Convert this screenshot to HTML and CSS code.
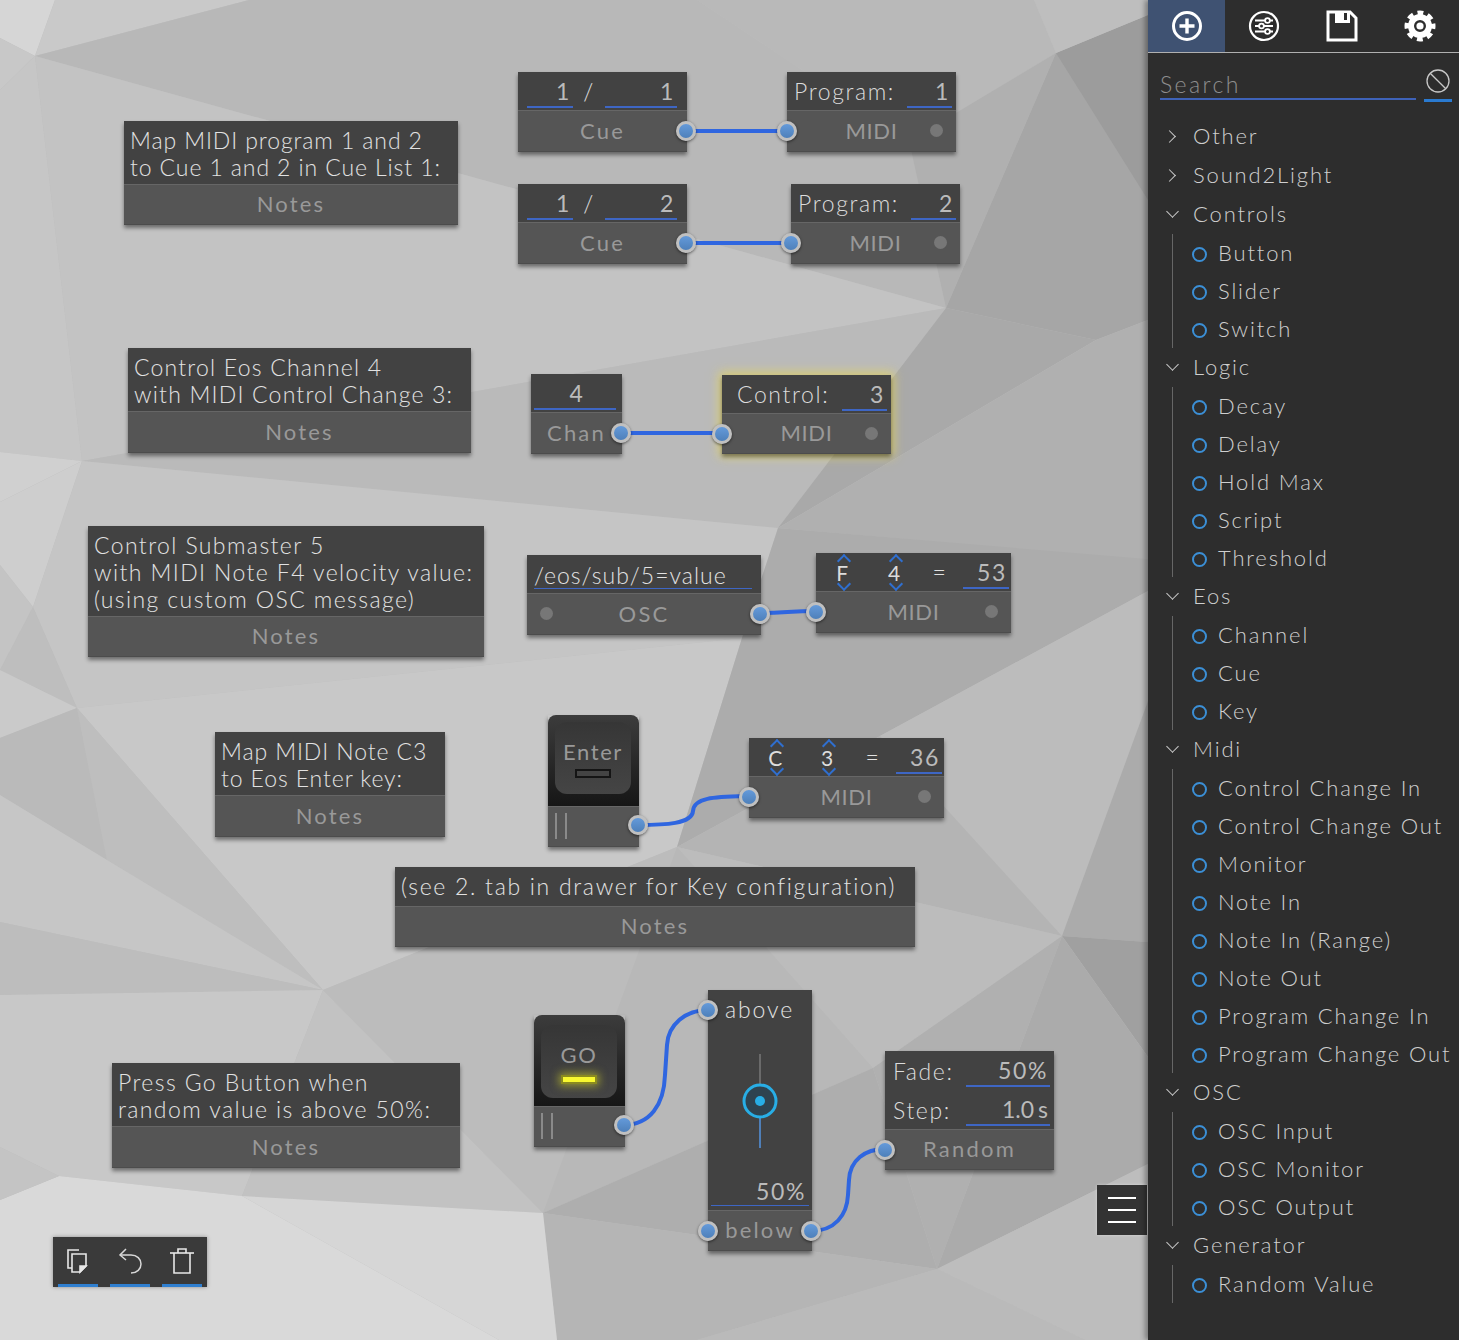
FILE: index.html
```html
<!DOCTYPE html>
<html lang="en">
<head>
<meta charset="UTF-8">
<title>Patch editor</title>
<link rel="stylesheet" href="styles.css">
</head>
<body>
<div class="app">
  <main class="canvas">
    <svg class="backdrop" width="1148" height="1340" viewBox="0 0 1148 1340">
      <rect width="1148" height="1340" fill="#bdbdbd"/>
      <polygon fill="#d6d6d6" points="0,0 55,0 35,56 0,38"/>
      <polygon fill="#c8c8c8" points="0,38 35,56 0,90"/>
      <polygon fill="#c9c9c9" points="55,0 249,0 35,56"/>
      <polygon fill="#b8b8b8" points="35,56 946,308 909,141 697,0 249,0"/>
      <polygon fill="#c6c6c6" points="0,90 35,56 82,461 0,452"/>
      <polygon fill="#c3c3c3" points="35,56 946,308 82,461"/>
      <polygon fill="#bababa" points="946,308 82,461 778,528"/>
      <polygon fill="#a9a9a9" points="946,308 778,528 1096,340"/>
      <polygon fill="#b9b9b9" points="697,0 1034,0 1056,53 909,141"/>
      <polygon fill="#b0b0b0" points="909,141 1056,53 946,308"/>
      <polygon fill="#a6a6a6" points="1056,53 1148,100 1148,320 1096,340 946,308"/>
      <polygon fill="#9c9c9c" points="1056,53 1148,15 1148,200"/>
      <polygon fill="#bebebe" points="1034,0 1148,0 1148,15 1056,53"/>
      <polygon fill="#b0b0b0" points="1096,340 1148,320 1148,560 778,528"/>
      <polygon fill="#d0d0d0" points="0,452 82,461 0,502"/>
      <polygon fill="#cecece" points="0,502 82,461 33,607 0,565"/>
      <polygon fill="#c5c5c5" points="82,461 778,528 742,638 77,708 33,607"/>
      <polygon fill="#c4c4c4" points="0,565 33,607 0,670"/>
      <polygon fill="#bebebe" points="33,607 77,708 0,670"/>
      <polygon fill="#cacaca" points="0,670 77,708 0,738"/>
      <polygon fill="#bababa" points="0,738 77,708 107,860 0,795"/>
      <polygon fill="#c8c8c8" points="77,708 742,638 677,847 323,990"/>
      <polygon fill="#bebebe" points="77,708 323,990 107,860"/>
      <polygon fill="#c6c6c6" points="0,795 107,860 323,990 0,922"/>
      <polygon fill="#bdbdbd" points="0,922 323,990 0,995"/>
      <polygon fill="#c8c8c8" points="0,995 323,990 242,1196 59,1176 0,1147"/>
      <polygon fill="#c2c2c2" points="323,990 543,1213 242,1196"/>
      <polygon fill="#bcbcbc" points="323,990 677,847 543,1213"/>
      <polygon fill="#acacac" points="778,528 1148,559 1148,591 880,736 677,847 742,638"/>
      <polygon fill="#bcbcbc" points="880,736 1148,591 1148,701 1062,936"/>
      <polygon fill="#b4b4b4" points="677,847 880,736 1062,936"/>
      <polygon fill="#ababab" points="1148,701 1062,936 1148,942"/>
      <polygon fill="#a0a0a0" points="1062,936 1148,942 1148,1057"/>
      <polygon fill="#bcbcbc" points="677,847 1062,936 873,1068"/>
      <polygon fill="#b8b8b8" points="677,847 873,1068 543,1213"/>
      <polygon fill="#b0b0b0" points="873,1068 1062,936 937,1269"/>
      <polygon fill="#aeaeae" points="873,1068 937,1269 543,1213"/>
      <polygon fill="#ababab" points="1062,936 1148,1057 1148,1164 937,1269"/>
      <polygon fill="#bdbdbd" points="937,1269 1148,1164 1148,1340 1085,1340"/>
      <polygon fill="#b5b5b5" points="543,1213 937,1269 697,1340 557,1340"/>
      <polygon fill="#bababa" points="937,1269 1085,1340 697,1340"/>
      <polygon fill="#d6d6d6" points="242,1196 543,1213 557,1340 499,1340"/>
      <polygon fill="#d9d9d9" points="59,1176 242,1196 499,1340 0,1340 0,1200"/>
      <polygon fill="#c4c4c4" points="0,1147 59,1176 0,1200"/>
    </svg>

    <svg class="wires" width="1148" height="1340" viewBox="0 0 1148 1340" fill="none">
      <path d="M686 131H787"/>
      <path d="M686 243H791"/>
      <path d="M621 433H722"/>
      <path d="M760 613C785 613 790 611 816 611"/>
      <path d="M638 825C665 825 692 824 693 811C694 797 715 797 749 796"/>
      <path d="M623 1125C650 1125 664 1105 665 1075L667 1045C668 1025 685 1010 708 1010"/>
      <path d="M811 1231C835 1231 847 1215 848 1195L849 1180C850 1160 865 1149 885 1149"/>
    </svg>

    <section class="node note note-a">
      <div class="head text">Map MIDI program 1 and 2<br>to Cue 1 and 2 in Cue List 1:</div>
      <div class="foot">Notes</div>
    </section>

    <section class="node cue cue-a">
      <div class="head">
        <span class="field cue-list">1</span><span class="slash">/</span><span class="field cue-num">1</span>
      </div>
      <div class="foot">Cue<i class="port port-r"></i></div>
    </section>

    <section class="node midi midi-a">
      <div class="head">
        <span class="label">Program:</span><span class="field midi-val">1</span>
      </div>
      <div class="foot">MIDI<i class="port port-l"></i><i class="dot dot-r"></i></div>
    </section>

    <section class="node cue cue-b">
      <div class="head">
        <span class="field cue-list">1</span><span class="slash">/</span><span class="field cue-num">2</span>
      </div>
      <div class="foot">Cue<i class="port port-r"></i></div>
    </section>

    <section class="node midi midi-b">
      <div class="head">
        <span class="label">Program:</span><span class="field midi-val">2</span>
      </div>
      <div class="foot">MIDI<i class="port port-l"></i><i class="dot dot-r"></i></div>
    </section>

    <section class="node note note-b">
      <div class="head text">Control Eos Channel 4<br>with MIDI Control Change 3:</div>
      <div class="foot">Notes</div>
    </section>

    <section class="node chan">
      <div class="head"><span class="field chan-val">4</span></div>
      <div class="foot chan-foot">Chan<i class="port port-r"></i></div>
    </section>

    <section class="node midi midi-c">
      <div class="head">
        <span class="label">Control:</span><span class="field midi-val">3</span>
      </div>
      <div class="foot">MIDI<i class="port port-l"></i><i class="dot dot-r"></i></div>
    </section>

    <section class="node note note-c">
      <div class="head text">Control Submaster 5<br>with MIDI Note F4 velocity value:<br>(using custom OSC message)</div>
      <div class="foot">Notes</div>
    </section>

    <section class="node osc">
      <div class="head"><span class="field osc-path">/eos/sub/5=value</span></div>
      <div class="foot">OSC<i class="dot dot-l"></i><i class="port port-r"></i></div>
    </section>

    <section class="node midi-note midi-d">
      <div class="head">
        <span class="spin spin-a">F</span><span class="spin spin-b">4</span><span class="equals">=</span><span class="field note-val">53</span>
      </div>
      <div class="foot">MIDI<i class="port port-l"></i><i class="dot dot-r"></i></div>
    </section>

    <section class="node note note-d">
      <div class="head text">Map MIDI Note C3<br>to Eos Enter key:</div>
      <div class="foot">Notes</div>
    </section>

    <section class="node key key-enter">
      <div class="key-well">
        <div class="key-cap">
          <span class="key-name">Enter</span>
          <span class="led"></span>
        </div>
      </div>
      <div class="foot key-foot"><i class="grip"></i><i class="port port-r"></i></div>
    </section>

    <section class="node midi-note midi-e">
      <div class="head">
        <span class="spin spin-a">C</span><span class="spin spin-b">3</span><span class="equals">=</span><span class="field note-val">36</span>
      </div>
      <div class="foot">MIDI<i class="port port-l"></i><i class="dot dot-r"></i></div>
    </section>

    <section class="node note note-e">
      <div class="head text">(see 2. tab in drawer for Key configuration)</div>
      <div class="foot">Notes</div>
    </section>

    <section class="node note note-f">
      <div class="head text">Press Go Button when<br>random value is above 50%:</div>
      <div class="foot">Notes</div>
    </section>

    <section class="node key key-go">
      <div class="key-well">
        <div class="key-cap">
          <span class="key-name">GO</span>
          <span class="led led-on"></span>
        </div>
      </div>
      <div class="foot key-foot"><i class="grip"></i><i class="port port-r"></i></div>
    </section>

    <section class="node fader">
      <div class="fader-body">
        <span class="fader-top">above<i class="port port-l"></i></span>
        <div class="fader-track">
          <svg width="40" height="96" viewBox="0 0 40 96">
            <line x1="20" y1="0" x2="20" y2="32" stroke="#6a6a6a" stroke-width="2"/>
            <line x1="20" y1="62" x2="20" y2="94" stroke="#4f7fb8" stroke-width="2"/>
            <circle cx="20" cy="47" r="16" fill="#2e4350" stroke="#28aee6" stroke-width="3"/>
            <circle cx="20" cy="47" r="5" fill="#28aee6"/>
          </svg>
        </div>
        <span class="field fader-val">50%</span>
      </div>
      <div class="foot">below<i class="port port-l"></i><i class="port port-r"></i></div>
    </section>

    <section class="node random">
      <div class="random-body">
        <div class="random-row"><span class="label">Fade:</span><span class="field random-val">50%</span></div>
        <div class="random-row"><span class="label">Step:</span><span class="field random-val step-val">1.0 s</span></div>
      </div>
      <div class="foot">Random<i class="port port-l"></i></div>
    </section>

    <div class="toolbar">
      <button class="tool">
        <svg width="26" height="28" viewBox="0 0 26 28" fill="none" stroke="#e8e8e8" stroke-width="1.6">
          <path d="M14 3H3V21H7"/>
          <path d="M7 7H21V19L15 25H7Z"/>
          <path d="M15 25V19H21Z" fill="#e8e8e8"/>
        </svg>
      </button>
      <button class="tool">
        <svg width="26" height="28" viewBox="0 0 26 28" fill="none" stroke="#d8d8d8" stroke-width="1.5">
          <path d="M9 2L3 8L9 13"/>
          <path d="M3 8H14C20 8 24 12 24 17C24 22 20 26 14 26"/>
        </svg>
      </button>
      <button class="tool">
        <svg width="26" height="28" viewBox="0 0 26 28" fill="none" stroke="#e8e8e8" stroke-width="1.6">
          <path d="M1 6H25"/>
          <path d="M9 6V2H17V6"/>
          <path d="M5 6V26H21V6"/>
        </svg>
      </button>
    </div>

    <button class="menu-btn"><span></span><span></span><span></span></button>
  </main>

  <aside class="drawer">
    <nav class="tabs">
      <a class="tab tab-on">
        <svg width="32" height="32" viewBox="0 0 32 32" fill="none" stroke="#fff">
          <circle cx="16" cy="16" r="13.5" stroke-width="3"/>
          <path d="M16 8.5V23.5M8.5 16H23.5" stroke-width="3.4"/>
        </svg>
      </a>
      <a class="tab">
        <svg width="32" height="32" viewBox="0 0 32 32" fill="none" stroke="#fff" stroke-width="1.8">
          <circle cx="16" cy="16" r="14" stroke-width="2.2"/>
          <path d="M7 10.5H17M22 10.5H25M7 16H11M16 16H25M7 21.5H17M22 21.5H25"/>
          <circle cx="19.5" cy="10.5" r="2.4"/>
          <circle cx="13.5" cy="16" r="2.4"/>
          <circle cx="19.5" cy="21.5" r="2.4"/>
        </svg>
      </a>
      <a class="tab">
        <svg width="32" height="32" viewBox="0 0 32 32" fill="none" stroke="#fff" stroke-width="3">
          <path d="M2 2H24L30 8V30H2Z"/>
          <path d="M9 1H24V13H9Z" fill="#fff" stroke="none"/>
          <path d="M18 3H21V10H18Z" fill="#2d2d2d" stroke="none"/>
        </svg>
      </a>
      <a class="tab">
        <svg width="32" height="32" viewBox="0 0 32 32" fill="none" stroke="#fff">
          <circle cx="16" cy="16" r="13" stroke-width="5" stroke-dasharray="5.7 4.51" stroke-dashoffset="2.85"/>
          <circle cx="16" cy="16" r="9" stroke-width="6"/>
          <circle cx="16" cy="16" r="3.6" fill="#fff" stroke="none"/>
        </svg>
      </a>
    </nav>

    <div class="search">
      <span class="search-box">Search</span>
      <span class="search-clear">
        <svg width="26" height="26" viewBox="0 0 26 26" fill="none" stroke="#c8c8c8" stroke-width="1.3">
          <circle cx="13" cy="13" r="11"/>
          <path d="M5.2 5.2L20.8 20.8"/>
        </svg>
      </span>
    </div>

    <ul class="tree">
      <li class="cat closed">Other</li>
      <li class="cat closed">Sound2Light</li>
      <li class="cat">Controls</li>
      <li><ul class="group">
        <li class="item">Button</li>
        <li class="item">Slider</li>
        <li class="item">Switch</li>
      </ul></li>
      <li class="cat">Logic</li>
      <li><ul class="group">
        <li class="item">Decay</li>
        <li class="item">Delay</li>
        <li class="item">Hold Max</li>
        <li class="item">Script</li>
        <li class="item">Threshold</li>
      </ul></li>
      <li class="cat">Eos</li>
      <li><ul class="group">
        <li class="item">Channel</li>
        <li class="item">Cue</li>
        <li class="item">Key</li>
      </ul></li>
      <li class="cat">Midi</li>
      <li><ul class="group">
        <li class="item">Control Change In</li>
        <li class="item">Control Change Out</li>
        <li class="item">Monitor</li>
        <li class="item">Note In</li>
        <li class="item">Note In (Range)</li>
        <li class="item">Note Out</li>
        <li class="item">Program Change In</li>
        <li class="item">Program Change Out</li>
      </ul></li>
      <li class="cat">OSC</li>
      <li><ul class="group">
        <li class="item">OSC Input</li>
        <li class="item">OSC Monitor</li>
        <li class="item">OSC Output</li>
      </ul></li>
      <li class="cat">Generator</li>
      <li><ul class="group">
        <li class="item">Random Value</li>
      </ul></li>
    </ul>
  </aside>
</div>
</body>
</html>
```

FILE: styles.css
```css
* {
    box-sizing: border-box;
}
body {
    margin: 0;
    background: #bdbdbd;
    font-family: Lato, "Open Sans", sans-serif;
    font-weight: 300;
    letter-spacing: 1.6px;
    color: #e2e2e2;
}
.app {
    display: flex;
    width: 1459px;
    height: 1340px;
    overflow: hidden;
}
.canvas {
    position: relative;
    width: 1148px;
    flex: none;
}
.backdrop, .wires {
    position: absolute;
    left: 0;
    top: 0;
}
.wires {
    z-index: 5;
    pointer-events: none;
}
.wires path {
    stroke: #2f66e0;
    stroke-width: 4;
}

/* nodes */
.node {
    position: absolute;
    display: flex;
    flex-direction: column;
    box-shadow: 0 3px 4px rgba(0, 0, 0, 0.45);
    font-size: 23px;
}
.head {
    flex: none;
    display: flex;
    align-items: flex-end;
    height: 39px;
    background: #424242;
    border-bottom: 1px solid #666;
    padding-bottom: 2px;
}
.head.text {
    display: block;
    height: auto;
    padding: 6px 6px 3px;
    line-height: 27px;
    white-space: nowrap;
}
.foot {
    position: relative;
    flex: 1;
    display: flex;
    align-items: center;
    justify-content: center;
    padding-bottom: 2px;
    background: #555;
    border-bottom: 1px solid #4c4c4c;
    color: #999;
    font-weight: 400;
    font-size: 22px;
    letter-spacing: 2.2px;
}
.field {
    display: block;
    height: 31px;
    line-height: 29px;
    text-align: right;
    border-bottom: 2px solid #3e66c4;
    color: #bbb;
    font-weight: 400;
    padding-right: 2px;
}
.label {
    color: #dcdcdc;
}

.note-a { left: 124px; top: 121px; width: 334px; height: 104px; letter-spacing: 0.9px; }
.note-b { left: 128px; top: 348px; width: 343px; height: 105px; letter-spacing: 1.2px; }
.note-c { left: 88px; top: 526px; width: 396px; height: 131px; letter-spacing: 1.4px; }
.note-d { left: 215px; top: 732px; width: 230px; height: 105px; letter-spacing: 0.9px; }
.note-e { left: 395px; top: 867px; width: 520px; height: 80px; letter-spacing: 1.7px; }
.note-f { left: 112px; top: 1063px; width: 348px; height: 105px; letter-spacing: 1.4px; }
.note-e .head.text {
    padding-bottom: 6px;
}

.cue, .midi {
    width: 169px;
    height: 80px;
}
.cue-a { left: 518px; top: 72px; }
.cue-b { left: 518px; top: 184px; }
.midi-a { left: 787px; top: 72px; }
.midi-b { left: 791px; top: 184px; }
.midi-c {
    left: 722px;
    top: 375px;
    height: 79px;
    box-shadow: 0 3px 4px rgba(0, 0, 0, 0.4), 0 0 10px 3px rgba(240, 220, 70, 0.6);
}
.cue-list {
    width: 46px;
    margin-left: 9px;
}
.slash {
    width: 32px;
    height: 31px;
    line-height: 29px;
    text-align: center;
}
.cue-num {
    width: 72px;
}
.midi .label {
    flex: 1;
    padding-left: 7px;
    height: 31px;
    line-height: 29px;
}
.midi .midi-val {
    width: 45px;
    margin-right: 4px;
}
.midi-c .label {
    padding-left: 15px;
}
.midi .foot, .midi-note .foot {
    letter-spacing: 0.6px;
}

.chan {
    left: 531px;
    top: 374px;
    width: 91px;
    height: 80px;
}
.chan-val {
    width: 82px;
    margin-left: 3px;
    padding: 0 0 0 4px;
    text-align: center;
}
.chan-foot {
    justify-content: flex-start;
    padding-left: 16px;
}

.osc {
    left: 527px;
    top: 555px;
    width: 234px;
    height: 80px;
}
.osc-path {
    width: 218px;
    margin-left: 7px;
    margin-bottom: 2px;
    border-bottom-width: 1px;
    font-weight: 300;
    color: #e2e2e2;
    text-align: left;
    padding: 0;
    line-height: 35px;
    letter-spacing: 1px;
}

.midi-note {
    width: 195px;
    height: 80px;
}
.midi-d { left: 816px; top: 553px; }
.midi-e { left: 749px; top: 738px; }
.spin {
    position: relative;
    width: 52px;
    height: 31px;
    line-height: 30px;
    text-align: center;
    color: #ddd;
    font-size: 21px;
    font-weight: 400;
}
.spin-a {
    margin-left: 1px;
}
.spin::before, .spin::after {
    content: "";
    position: absolute;
    left: 22px;
    width: 8px;
    height: 8px;
    border: solid #2f6fd0;
    transform: rotate(45deg);
}
.spin::before {
    top: -2px;
    border-width: 2px 0 0 2px;
}
.spin::after {
    bottom: 0;
    border-width: 0 2px 2px 0;
}
.equals {
    width: 38px;
    height: 31px;
    line-height: 29px;
    text-align: center;
}
.note-val {
    width: 46px;
    margin-left: 4px;
}

/* ports and status dots */
.port {
    position: absolute;
    top: 50%;
    width: 20px;
    height: 20px;
    margin-top: -10px;
    border-radius: 50%;
    border: 3px solid #c0c0c0;
    background: linear-gradient(#649ada, #4e80ba);
    box-shadow: 0 1px 3px rgba(0, 0, 0, 0.55);
    z-index: 6;
}
.port-l { left: -10px; }
.port-r { right: -9px; }
.dot {
    position: absolute;
    top: 50%;
    width: 13px;
    height: 13px;
    margin-top: -7px;
    border-radius: 50%;
    background: #777;
}
.dot-r { right: 13px; }
.dot-l { left: 13px; }

/* keys */
.key {
    width: 91px;
    height: 132px;
}
.key-enter { left: 548px; top: 715px; }
.key-go { left: 534px; top: 1015px; }
.key-well {
    flex: none;
    height: 91px;
    padding: 7px 8px 12px 7px;
    background: linear-gradient(#3c3c3c, #161616);
    border-radius: 8px 8px 0 0;
}
.key-go .key-well {
    padding-top: 10px;
    padding-bottom: 8px;
}
.key-cap {
    display: flex;
    flex-direction: column;
    align-items: center;
    height: 100%;
    border-radius: 12px;
    background: linear-gradient(#363636, #454545);
    color: #999;
    font-weight: 400;
    font-size: 22px;
}
.key-name {
    margin-top: 16px;
    line-height: 28px;
}
.led {
    width: 36px;
    height: 9px;
    margin-top: 3px;
    background: #444;
    border: 2px solid #151515;
}
.led-on {
    margin-top: 6px;
    background: #f8f830;
    border-color: #8a8a20;
    box-shadow: 0 0 8px 2px rgba(220, 220, 40, 0.55);
}
.key-foot {
    justify-content: flex-start;
    border-top: 1px solid #666;
}
.key-foot .port {
    margin-top: -12px;
}
.grip {
    width: 12px;
    height: 26px;
    margin-left: 7px;
    border: solid #8a8a8a;
    border-width: 0 2px;
}

/* crossfade */
.fader {
    left: 708px;
    top: 990px;
    width: 104px;
    height: 261px;
}
.fader-body {
    flex: none;
    height: 221px;
    display: flex;
    flex-direction: column;
    background: #424242;
    border-bottom: 1px solid #666;
}
.fader-top {
    position: relative;
    height: 40px;
    line-height: 38px;
    padding-left: 17px;
    letter-spacing: 1.9px;
}
.fader-track {
    display: flex;
    justify-content: center;
    height: 96px;
    margin-top: 24px;
}
.fader-val {
    width: 98px;
    height: 32px;
    margin: 24px 0 0 3px;
    border-bottom-width: 1px;
    padding-right: 3px;
    line-height: 34px;
}

/* random */
.random {
    left: 885px;
    top: 1051px;
    width: 169px;
    height: 119px;
}
.random-body {
    flex: none;
    height: 79px;
    background: #424242;
    border-bottom: 1px solid #666;
}
.random-row {
    display: flex;
    justify-content: space-between;
    height: 39px;
    padding: 5px 4px 0 8px;
}
.random-row .label {
    line-height: 30px;
}
.random-val {
    width: 84px;
    height: 31px;
    padding-right: 2px;
}
.step-val {
    letter-spacing: 0;
    word-spacing: -2px;
}

/* bottom left toolbar */
.toolbar {
    position: absolute;
    left: 53px;
    top: 1237px;
    display: flex;
    gap: 12px;
    width: 154px;
    height: 50px;
    padding: 0 5px;
    background: #3a3a3a;
    box-shadow: 0 0 4px rgba(0, 0, 0, 0.35);
}
.tool {
    display: flex;
    align-items: center;
    justify-content: center;
    width: 40px;
    padding: 0;
    background: none;
    border: 0;
    border-bottom: 3px solid #2f7fd0;
}
.menu-btn {
    position: absolute;
    left: 1097px;
    top: 1185px;
    display: flex;
    flex-direction: column;
    align-items: center;
    justify-content: center;
    gap: 10px;
    width: 50px;
    height: 50px;
    padding: 0;
    background: #333;
    border: 0;
    box-shadow: 0 0 3px rgba(255, 255, 255, 0.4);
}
.menu-btn span {
    width: 28px;
    height: 2px;
    background: #fff;
}

/* drawer */
.drawer {
    width: 311px;
    flex: none;
    background: #2d2d2d;
    box-shadow: -3px 0 5px rgba(0, 0, 0, 0.35);
    z-index: 8;
}
.tabs {
    display: flex;
    height: 53px;
    border-bottom: 1px solid #b0b0b0;
}
.tab {
    display: flex;
    align-items: center;
    justify-content: center;
    width: 78px;
    height: 52px;
}
.tab-on {
    width: 77px;
    background: #3f5272;
}
.search {
    display: flex;
    align-items: flex-end;
    height: 50px;
    padding: 0 7px 0 12px;
}
.search-box {
    width: 256px;
    height: 30px;
    line-height: 29px;
    margin-bottom: 3px;
    border-bottom: 2px solid #3e62b8;
    color: #8e8e8e;
    font-size: 23px;
    letter-spacing: 2.4px;
}
.search-clear {
    display: flex;
    justify-content: center;
    width: 28px;
    height: 34px;
    margin-left: 8px;
    margin-bottom: 1px;
    border-bottom: 3px solid #2a7ad0;
}
.tree, .group {
    list-style: none;
    margin: 0;
    padding: 0;
}
.tree {
    padding-top: 14px;
    font-size: 22px;
    letter-spacing: 1.85px;
    color: #cfcfcf;
    white-space: nowrap;
}
.cat {
    position: relative;
    height: 39px;
    line-height: 37px;
    padding-left: 45px;
}
.cat::before {
    content: "";
    position: absolute;
    left: 20px;
    top: 12px;
    width: 8px;
    height: 8px;
    border: solid #ccc;
    border-width: 0 1px 1px 0;
    transform: rotate(45deg);
}
.cat.closed::before {
    left: 17px;
    top: 15px;
    transform: rotate(-45deg);
}
.group {
    margin-left: 24px;
    border-left: 1px solid #666;
}
.item {
    position: relative;
    height: 38px;
    line-height: 38px;
    padding-left: 45px;
}
.item::before {
    content: "";
    position: absolute;
    left: 19px;
    top: 13px;
    width: 11px;
    height: 11px;
    border: 2px solid #3b8fd6;
    border-radius: 50%;
}
```
